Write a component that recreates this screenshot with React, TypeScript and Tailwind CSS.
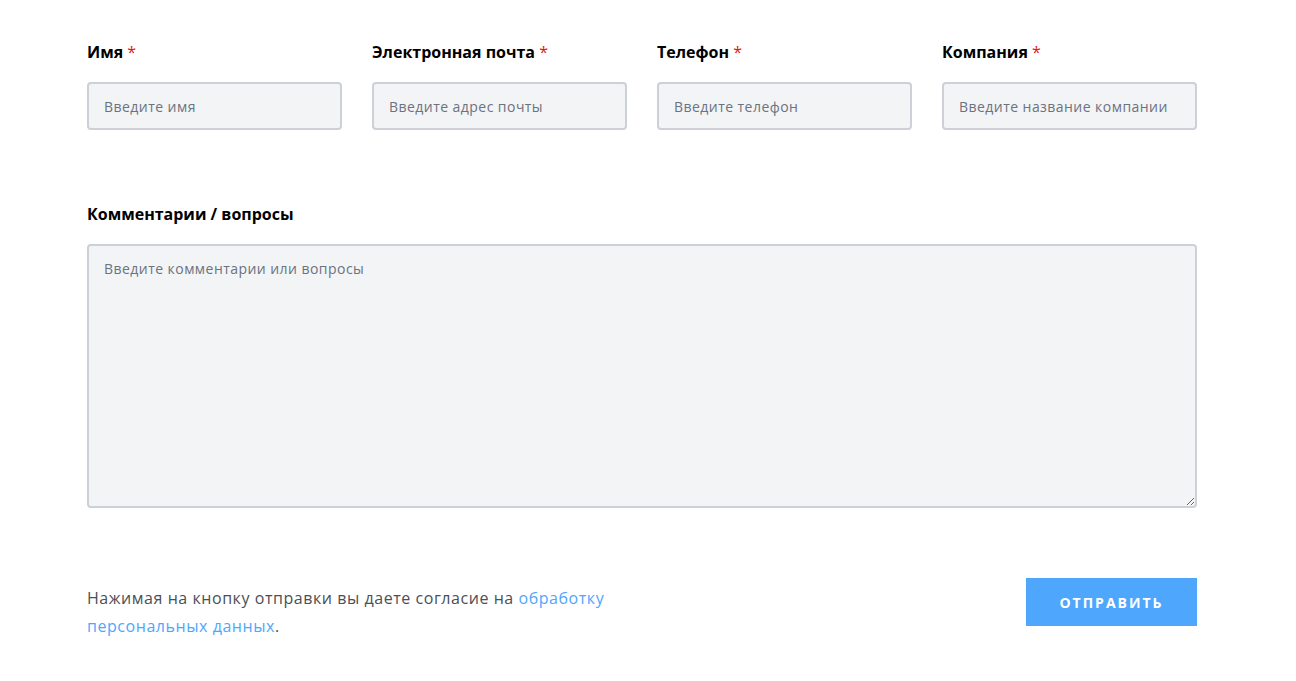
import React from "react";

const font = { fontFamily: "'Open Sans', 'Noto Sans', Arial, sans-serif" };

function Field({ label, placeholder }: { label: string; placeholder: string }) {
  return (
    <div className="flex flex-col">
      <label className="text-[16px] font-bold text-black leading-5 h-5">
        {label} <span className="font-normal text-[#e3160b]">*</span>
      </label>
      <input
        placeholder={placeholder}
        className="mt-[20px] h-[48px] w-full rounded-[4px] border-2 border-[#cdd0d6] bg-[#f3f4f6] px-[15px] text-[14px] tracking-[0.45px] text-[#374151] placeholder:text-[#6b7280] outline-none"
      />
    </div>
  );
}

export default function App() {
  return (
    <div className="min-h-[681px] w-full bg-white" style={font}>
      <div className="w-[1110px] pt-[42px] ml-[87px]">
        <div className="grid grid-cols-4 gap-[30px]">
          <Field label="Имя" placeholder="Введите имя" />
          <Field label="Электронная почта" placeholder="Введите адрес почты" />
          <Field label="Телефон" placeholder="Введите телефон" />
          <Field label="Компания" placeholder="Введите название компании" />
        </div>
        <div className="mt-[74px] flex flex-col">
          <label className="text-[16px] font-bold text-black leading-5 h-5">Комментарии / вопросы</label>
          <textarea
            placeholder="Введите комментарии или вопросы"
            className="mt-[20px] h-[264px] w-full rounded-[4px] border-2 border-[#cdd0d6] bg-[#f3f4f6] px-[15px] py-[12px] text-[14px] tracking-[0.45px] text-[#374151] placeholder:text-[#6b7280] outline-none"
          />
        </div>
        <div className="mt-[70px] flex items-start justify-between">
          <p className="w-[600px] text-[16px] leading-[28px] tracking-[0.55px] text-[#4b4f56] mt-[6px]">
            Нажимая на кнопку отправки вы даете согласие на{" "}
            <a className="text-[#4fa7fd]" href="#">обработку</a>
            <br />
            <a className="text-[#4fa7fd]" href="#">персональных данных</a>.
          </p>
          <button className="h-[48px] w-[171px] bg-[#4fa7fd] text-[14px] font-bold uppercase tracking-[2px] text-white">
            Отправить
          </button>
        </div>
      </div>
    </div>
  );
}
